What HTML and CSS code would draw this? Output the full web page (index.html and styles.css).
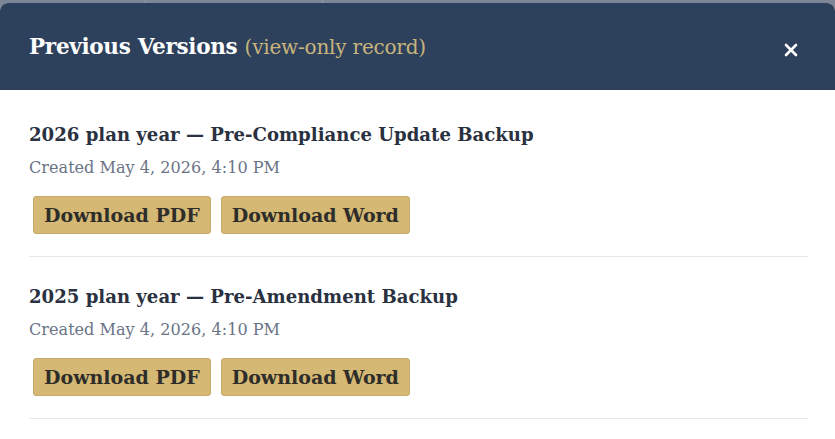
FILE: index.html
```html
<!DOCTYPE html>
<html lang="en">
<head>
<meta charset="utf-8">
<title>Previous Versions</title>
<link rel="stylesheet" href="styles.css">
</head>
<body>
<div class="backdrop">
  <span class="bd-line bd-a"></span>
  <span class="bd-line bd-b"></span>
</div>
<div class="modal">
  <header class="modal-header">
    <h2 class="modal-title">Previous Versions <span class="subtitle">(view-only record)</span></h2>
    <button class="close" aria-label="Close">
      <svg width="14" height="14" viewBox="0 0 14 14"><path d="M2 2 L12 12 M12 2 L2 12" stroke="#fff" stroke-width="2.6" stroke-linecap="round"/></svg>
    </button>
  </header>
  <div class="modal-body">
    <div class="version">
      <div class="v-title">2026 plan year — Pre-Compliance Update Backup</div>
      <div class="v-date">Created May 4, 2026, 4:10 PM</div>
      <div class="v-actions">
        <button class="btn">Download PDF</button>
        <button class="btn">Download Word</button>
      </div>
    </div>
    <div class="version">
      <div class="v-title">2025 plan year — Pre-Amendment Backup</div>
      <div class="v-date">Created May 4, 2026, 4:10 PM</div>
      <div class="v-actions">
        <button class="btn">Download PDF</button>
        <button class="btn">Download Word</button>
      </div>
    </div>
  </div>
</div>
</body>
</html>
```
FILE: styles.css
```css
html, body {
  margin: 0;
  padding: 0;
  background: #7c8696;
  height: 100%;
  overflow: hidden;
}
body {
  font-family: "DejaVu Serif", "Liberation Serif", serif;
  position: relative;
}
.backdrop {
  height: 3px;
  position: relative;
}
.bd-line {
  position: absolute;
  top: 0;
  width: 1px;
  height: 3px;
  background: #8e97a5;
}
.bd-a { left: 145px; }
.bd-b { left: 322px; }
.modal {
  background: #fff;
  border-radius: 8px 8px 0 0;
  overflow: hidden;
  height: 436px;
}
.modal-header {
  background: #2d405c;
  height: 87px;
  display: flex;
  align-items: center;
  justify-content: space-between;
  padding: 0 36px 0 29px;
  box-sizing: border-box;
}
.modal-title {
  margin: 0;
  color: #fff;
  font-size: 21.5px;
  font-weight: 700;
  letter-spacing: -0.3px;
  padding-top: 0;
}
.subtitle {
  color: #c9b47c;
  font-weight: 400;
  font-size: 20px;
  letter-spacing: -0.2px;
}
.close {
  background: none;
  border: 0;
  padding: 0;
  width: 16px;
  height: 16px;
  display: flex;
  align-items: center;
  justify-content: center;
  margin-top: 6px;
}
.modal-body {
  padding: 5px 27px 0 29px;
}
.version {
  padding: 27px 0 22px;
  border-bottom: 1px solid #e6e8eb;
}
.v-title {
  font-size: 18.1px;
  font-weight: 600;
  color: #2a3140;
  line-height: 26px;
}
.v-date {
  font-size: 16.1px;
  color: #6a7486;
  line-height: 24px;
  margin-top: 8px;
}
.v-actions {
  display: flex;
  gap: 10px;
  margin: 16px 0 0 4px;
}
.btn {
  font-family: inherit;
  font-size: 19px;
  font-weight: 700;
  color: #2e2d2a;
  background: #d4b873;
  border: 1px solid #c5ab6c;
  border-radius: 3px;
  height: 38px;
  padding: 0 10px;
  box-sizing: border-box;
}
```
